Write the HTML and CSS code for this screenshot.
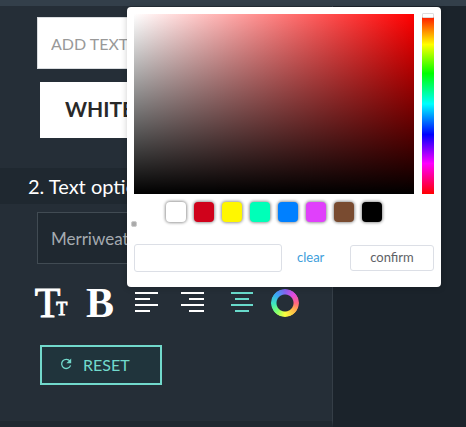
FILE: index.html
```html
<!DOCTYPE html>
<html lang="en">
<head>
<meta charset="utf-8">
<meta name="viewport" content="width=device-width, initial-scale=1">
<title>Text options</title>
<link rel="stylesheet" href="styles.css">
</head>
<body>
<header class="topbar"></header>
<main class="workspace">
  <section class="panel">
    <div class="entry">
      <input class="field text-field" type="text" placeholder="ADD TEXT" aria-label="Add text">
      <button class="white-button" type="button">WHITE</button>
    </div>
    <h2 class="heading">2. Text options</h2>
    <div class="options">
      <select class="field font-select" aria-label="Font">
        <option>Merriweather</option>
      </select>
      <div class="tools">
        <button class="tool" type="button" aria-label="Text size"><span class="size-large">T</span><span class="size-small">T</span></button>
        <button class="tool bold" type="button" aria-label="Bold">B</button>
        <button class="tool" type="button" aria-label="Align left">
          <svg width="24" height="22" viewBox="0 0 24 22"><path d="M0 1h23M0 7h15M0 13h23M0 19h15"/></svg>
        </button>
        <button class="tool" type="button" aria-label="Align right">
          <svg width="24" height="22" viewBox="0 0 24 22"><path d="M0 1h23M8 7h15M0 13h23M8 19h15"/></svg>
        </button>
        <button class="tool active" type="button" aria-label="Align center">
          <svg width="24" height="22" viewBox="0 0 24 22"><path d="M1 1h22M5 7h14M1 13h22M5 19h14"/></svg>
        </button>
        <button class="tool" type="button" aria-label="Text color"><span class="wheel"></span></button>
      </div>
      <button class="reset" type="button">
        <svg width="12" height="12" viewBox="0 0 12 12"><path d="M10 3.2A4.6 4.6 0 1 0 10.6 7.4"/><path class="tip" d="M11.2 .5v4.8H6.4z"/></svg>
        RESET
      </button>
    </div>
  </section>
</main>

<div class="picker" role="dialog" aria-label="Color picker">
  <div class="spectrum">
    <div class="shade"><span class="cursor"></span></div>
    <div class="hue"><span class="thumb"></span></div>
  </div>
  <div class="swatches">
    <button class="swatch white" type="button" aria-label="White"></button>
    <button class="swatch red" type="button" aria-label="Red"></button>
    <button class="swatch yellow" type="button" aria-label="Yellow"></button>
    <button class="swatch mint" type="button" aria-label="Mint"></button>
    <button class="swatch blue" type="button" aria-label="Blue"></button>
    <button class="swatch violet" type="button" aria-label="Violet"></button>
    <button class="swatch brown" type="button" aria-label="Brown"></button>
    <button class="swatch black" type="button" aria-label="Black"></button>
  </div>
  <div class="actions">
    <input class="value" type="text" aria-label="Color value">
    <button class="clear" type="button">clear</button>
    <button class="confirm" type="button">confirm</button>
  </div>
</div>
</body>
</html>
```
FILE: styles.css
```css
* {
  box-sizing: border-box;
}

body {
  margin: 0;
  min-height: 100vh;
  display: flex;
  flex-direction: column;
  background: #1b232b;
  color: #fff;
  font-family: Lato, "Open Sans", sans-serif;
  font-size: 16px;
  overflow: hidden;
}

button,
input,
select {
  font: inherit;
  margin: 0;
}

button {
  padding: 0;
  border: 0;
  background: none;
}

.topbar {
  height: 6px;
  background: #333f4a;
}

.workspace {
  flex: 1;
  display: flex;
}

.panel {
  flex: 0 0 333px;
  display: flex;
  flex-direction: column;
  border-right: 1px solid #353e47;
  border-bottom: 6px solid #1f2830;
  background: #252e37;
}

.entry {
  display: flex;
  flex-direction: column;
  gap: 13px;
  padding: 11px 37px 30px;
}

.field {
  height: 52px;
  width: 100%;
  padding: 0 13px;
  border-radius: 0;
}

.text-field {
  border: 1px solid #d9dcdf;
  background: #fff;
  color: #333;
}

.text-field::placeholder {
  color: #999;
  opacity: 1;
}

.white-button {
  height: 56px;
  margin-left: 3px;
  padding: 0 25px 4px;
  background: #fff;
  color: #292929;
  font-size: 21px;
  font-weight: 700;
  text-align: left;
}

.heading {
  margin: 0;
  padding: 0 28px;
  background: #1f2830;
  font-size: 20px;
  line-height: 36px;
  font-weight: 400;
}

.options {
  padding: 8px 37px 36px;
}

.font-select {
  display: block;
  appearance: none;
  border: 1px solid #414b53;
  background: #1f2830;
  color: #a5abb0;
  font-size: 17px;
}

.tools {
  display: grid;
  grid-template-columns: 50px 48px 46px 46px 52px 34px;
  height: 32px;
  margin: 23px -11px 26px;
}

.tool {
  display: flex;
  align-items: center;
  justify-content: center;
  color: #fff;
  font-family: "Liberation Serif", serif;
  line-height: 32px;
}

.tool svg {
  fill: none;
  stroke: currentColor;
  stroke-width: 2;
}

.tool.active {
  color: #69dacb;
}

.size-large {
  font-size: 42px;
  -webkit-text-stroke: 1px currentColor;
}

.size-small {
  margin-left: -4px;
  align-self: flex-end;
  font-size: 18px;
  line-height: 20px;
  -webkit-text-stroke: 1px currentColor;
}

.bold {
  font-size: 42px;
  font-weight: 700;
}

.wheel {
  width: 28px;
  height: 28px;
  border-radius: 50%;
  background: conic-gradient(#8666f5, #e04be0 45deg, #ff6680 90deg, #ffb04a 125deg, #faff3c 180deg, #7dff70 225deg, #3ee8bd 265deg, #3aa5f5 315deg, #8666f5);
  mask: radial-gradient(circle, transparent 8px, #000 9px);
}

.reset {
  display: flex;
  align-items: center;
  gap: 11px;
  height: 40px;
  margin-left: 3px;
  padding: 0 30px 2px 18px;
  border: 2px solid #72d9cc;
  background: #20343c;
  color: #72d9cc;
}

.reset svg {
  fill: none;
  stroke: currentColor;
  stroke-width: 1.3;
}

.reset .tip {
  fill: currentColor;
  stroke: none;
}

.picker {
  position: absolute;
  top: 7px;
  left: 127px;
  width: 314px;
  padding: 7px 7px 15px;
  border-radius: 4px;
  background: #fff;
  box-shadow: 0 1px 6px rgb(0 0 0 / 20%);
  font-size: 13px;
}

.spectrum {
  display: flex;
  gap: 8px;
  height: 180px;
}

.shade {
  position: relative;
  flex: 1;
  background: linear-gradient(to top, #000, transparent), linear-gradient(to right, #fff, #f00);
}

.cursor {
  position: absolute;
  top: 207px;
  left: -3px;
  width: 6px;
  height: 6px;
  border: 1px solid #ccc;
  border-radius: 2px;
  background: #aaa;
}

.hue {
  position: relative;
  width: 12px;
  background: linear-gradient(#f00, #ff0 17%, #0f0 33%, #0ff 50%, #00f 67%, #f0f 83%, #f00);
}

.thumb {
  position: absolute;
  top: -1px;
  left: 0;
  width: 12px;
  height: 5px;
  border: 1px solid #ddd;
  border-radius: 1px;
  background: #fff;
}

.swatches {
  display: flex;
  justify-content: center;
  gap: 8px;
  margin: 8px 20px 22px 0;
}

.swatch {
  width: 20px;
  height: 20px;
  border-radius: 4px;
  box-shadow: 0 0 3px 1px rgb(0 0 0 / 40%);
}

.white { background: #fff; }
.red { background: #d0021b; }
.yellow { background: #fff700; }
.mint { background: #00ffb8; }
.blue { background: #0080ff; }
.violet { background: #e040fb; }
.brown { background: #794b30; }
.black { background: #000; }

.actions {
  display: flex;
  align-items: center;
}

.value {
  width: 148px;
  height: 28px;
  padding: 0 8px;
  border: 1px solid #dcdfe6;
  border-radius: 3px;
  background: #fff;
}

.clear,
.confirm {
  height: 26px;
  padding-bottom: 2px;
}

.clear {
  margin: 0 auto 0 15px;
  color: #409edb;
}

.confirm {
  width: 84px;
  border: 1px solid #dcdfe6;
  border-radius: 3px;
  color: #606266;
}
```
